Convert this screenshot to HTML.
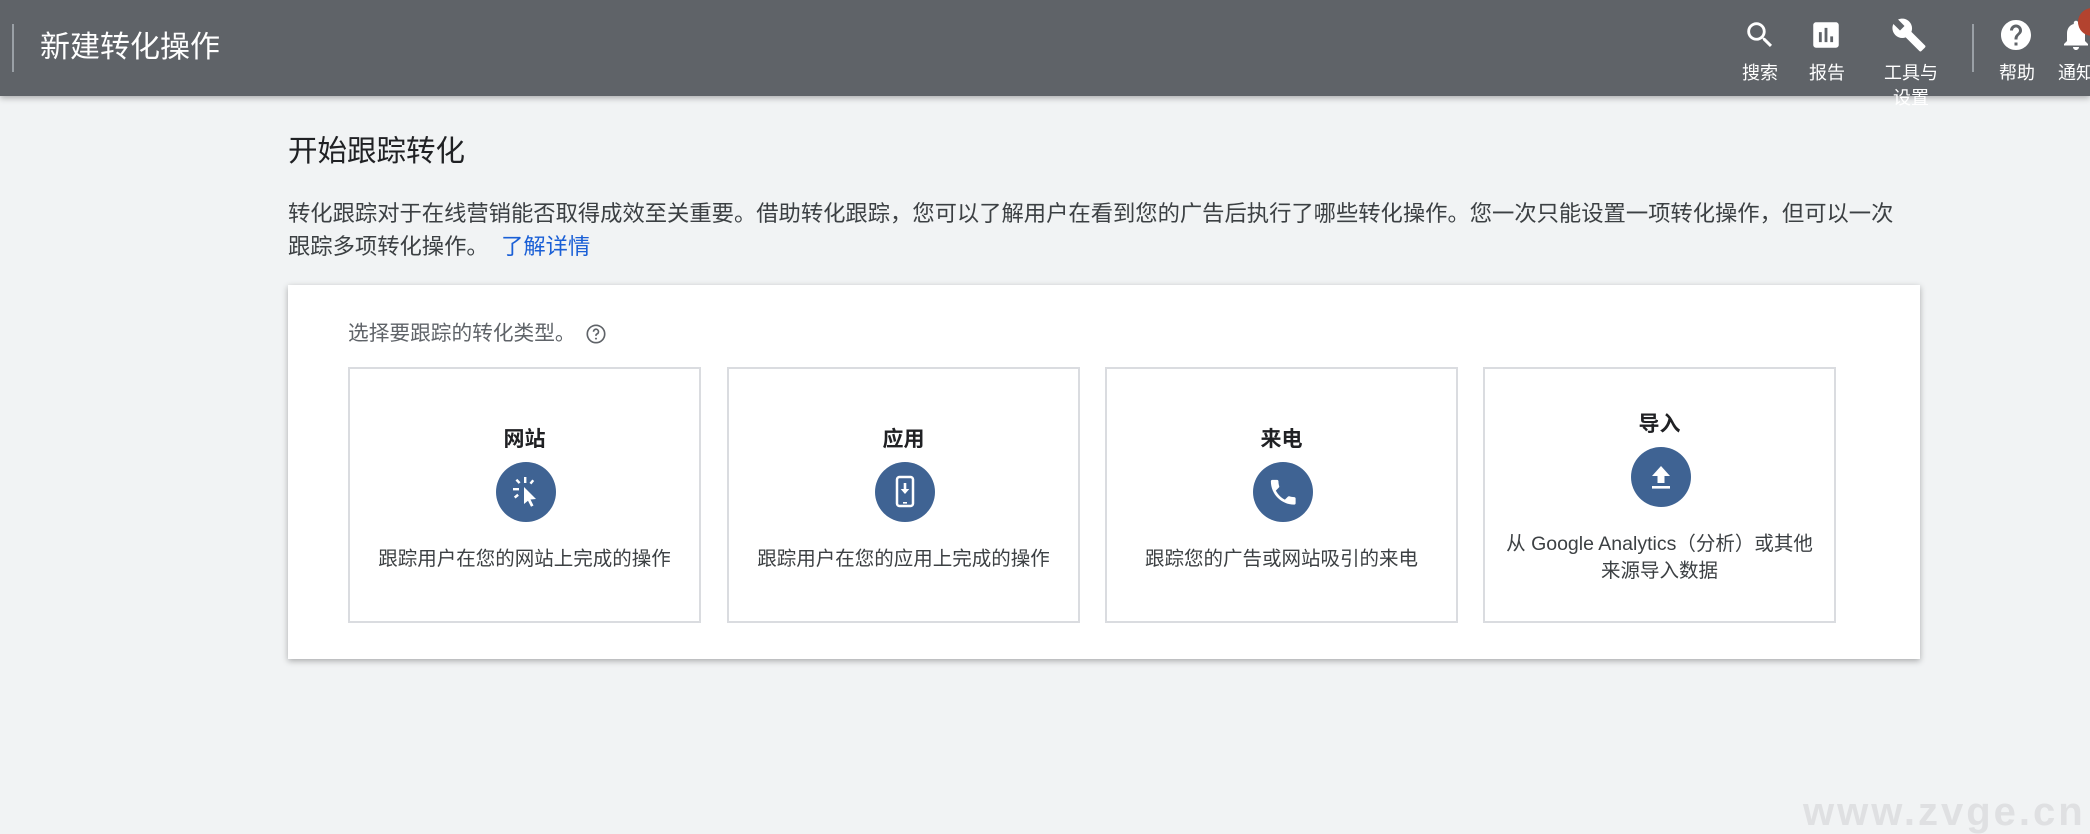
<!DOCTYPE html>
<html><head><meta charset="utf-8"><style>
*{margin:0;padding:0;box-sizing:border-box}
body{width:2090px;height:834px;overflow:hidden;background:#f1f3f4;font-family:"Liberation Sans","Noto Sans CJK SC",sans-serif;position:relative;color:#202124}
.hdr{position:absolute;left:0;top:0;width:2090px;height:96px;background:#5f6368;box-shadow:0 2px 6px rgba(0,0,0,.3)}
.abs{position:absolute}
.lbl{position:absolute;color:#fff;font-size:18px;text-align:center;width:80px;line-height:25px}
.card{position:absolute;left:288px;top:285px;width:1632px;height:374px;background:#fff;box-shadow:0 2px 6px rgba(0,0,0,.3)}
.opt{position:absolute;top:367px;width:353px;height:256px;border:2px solid #dadce0;background:#fff;text-align:center}
.opt .t{position:absolute;left:0;width:100%;font-size:21px;font-weight:bold;color:#202124}
.opt .c{position:absolute;left:146px;width:60px;height:60px;border-radius:50%;background:#3f6393}
.opt .d{position:absolute;left:0;width:100%;font-size:19.5px;color:#3c4043;line-height:27px}
</style></head><body>
<div class="hdr">
 <div class="abs" style="left:12px;top:24px;width:2px;height:48px;background:#9aa0a6"></div>
 <div class="abs" style="left:40px;top:28px;font-size:30px;color:#fff;line-height:40px">新建转化操作</div>
 <svg class="abs" style="left:1743px;top:18px" width="34" height="34" viewBox="0 0 24 24"><path fill="#fff" d="M15.5 14h-.79l-.28-.27A6.47 6.47 0 0 0 16 9.5 6.5 6.5 0 1 0 9.5 16c1.61 0 3.090-.59 4.23-1.57l.27.28v.79l5 4.99L20.490 19l-4.99-5zm-6 0C7.01 14 5 11.99 5 9.5S7.01 5 9.5 5 14 7.01 14 9.5 11.99 14 9.5 14z"/></svg>
 <svg class="abs" style="left:1809px;top:18px" width="34" height="34" viewBox="0 0 24 24"><path fill="#fff" d="M19 3H5c-1.1 0-2 .9-2 2v14c0 1.1.9 2 2 2h14c1.1 0 2-.9 2-2V5c0-1.1-.9-2-2-2zM9 17H7v-7h2v7zm4 0h-2V7h2v10zm4 0h-2v-4h2v4z"/></svg>
 <svg class="abs" style="left:1891px;top:17px" width="36" height="36" viewBox="0 0 24 24"><path fill="#fff" d="M22.7 19l-9.1-9.1c.9-2.3.4-5-1.5-6.9-2-2-5-2.4-7.4-1.3L9 6 6 9 1.6 4.7C.4 7.1.9 10.1 2.9 12.1c1.9 1.9 4.6 2.4 6.9 1.5l9.1 9.1c.4.4 1 .4 1.4 0l2.3-2.3c.5-.4.5-1.1.1-1.4z"/></svg>
 <div class="abs" style="left:1972px;top:24px;width:2px;height:48px;background:#9aa0a6"></div>
 <svg class="abs" style="left:1998px;top:17px" width="36" height="36" viewBox="0 0 24 24"><path fill="#fff" d="M12 2C6.48 2 2 6.48 2 12s4.480 10 10 10 10-4.48 10-10S17.52 2 12 2zm1 17h-2v-2h2v2zm2.07-7.75l-.9.92C13.45 12.9 13 13.5 13 15h-2v-.5c0-1.1.45-2.1 1.17-2.83l1.24-1.26c.37-.36.59-.86.59-1.41 0-1.1-.9-2-2-2s-2 .9-2 2H8c0-2.21 1.79-4 4-4s4 1.79 4 4c0 .88-.36 1.68-.93 2.25z"/></svg>
 <svg class="abs" style="left:2058px;top:17px" width="36" height="36" viewBox="0 0 24 24"><path fill="#fff" d="M12 22c1.1 0 2-.9 2-2h-4c0 1.1.89 2 2 2zm6-6v-5c0-3.07-1.64-5.64-4.5-6.32V4c0-.83-.67-1.5-1.5-1.5s-1.5.67-1.5 1.5v.68C7.63 5.36 6 7.92 6 11v5l-2 2v1h16v-1l-2-2z"/></svg>
 <div class="abs" style="left:2078px;top:8px;width:28px;height:28px;border-radius:50%;background:#b3432f"></div>
 <div class="lbl" style="left:1720px;top:61px">搜索</div>
 <div class="lbl" style="left:1787px;top:61px">报告</div>
 <div class="lbl" style="left:1871px;top:61px">工具与<br>设置</div>
 <div class="lbl" style="left:1977px;top:61px">帮助</div>
 <div class="lbl" style="left:2036px;top:61px">通知</div>
</div>
<div class="abs" style="left:288px;top:132px;font-size:29.5px;line-height:40px;color:#202124">开始跟踪转化</div>
<div class="abs" style="left:288px;top:197px;width:1615px;font-size:22.3px;line-height:33px;color:#3c4043">转化跟踪对于在线营销能否取得成效至关重要。借助转化跟踪，您可以了解用户在看到您的广告后执行了哪些转化操作。您一次只能设置一项转化操作，但可以一次跟踪多项转化操作。 &nbsp;<span style="color:#1a5fd6">了解详情</span></div>
<div class="card"></div>
<div class="abs" style="left:348px;top:320px;font-size:20.7px;color:#5f6368;line-height:28px">选择要跟踪的转化类型。</div>
<svg class="abs" style="left:585px;top:323px" width="22" height="22" viewBox="0 0 24 24"><circle cx="12" cy="12" r="9.5" fill="none" stroke="#5f6368" stroke-width="1.8"/><path d="M9.3 9.5a2.7 2.7 0 1 1 3.7 2.5c-.7.3-1 .8-1 1.5v.6" fill="none" stroke="#5f6368" stroke-width="1.8"/><circle cx="12" cy="17" r="1.1" fill="#5f6368"/></svg>

<div class="opt" style="left:348px">
 <div class="t" style="top:54px">网站</div>
 <div class="c" style="top:93px"><svg width="60" height="60" viewBox="0 0 60 60"><g fill="#fff"><path d="M28 25 L40 37 L34.5 37.5 L37.5 43.5 L35 44.7 L32 38.7 L28 42 Z"/><rect x="28" y="15" width="2.4" height="6"/><rect x="17" y="26" width="6" height="2.4"/><path d="M19.5 18.5l1.8-1.6 3.2 3.4-1.8 1.6z"/><path d="M36.3 17.5l1.9 1.5-2.8 3.4-1.9-1.5z"/><path d="M19.5 36.5l-1.6-1.9 3.4-2.8 1.6 1.9z"/></g></svg></div>
 <div class="d" style="top:177px">跟踪用户在您的网站上完成的操作</div>
</div>
<div class="opt" style="left:727px">
 <div class="t" style="top:54px">应用</div>
 <div class="c" style="top:93px"><svg width="60" height="60" viewBox="0 0 60 60"><rect x="22" y="15" width="16" height="29" rx="2.5" fill="none" stroke="#fff" stroke-width="2.5"/><rect x="28" y="40" width="4" height="1.6" fill="#fff"/><path d="M28.7 21h2.6v6h3l-4.3 5-4.3-5h3z" fill="#fff"/></svg></div>
 <div class="d" style="top:177px">跟踪用户在您的应用上完成的操作</div>
</div>
<div class="opt" style="left:1105px">
 <div class="t" style="top:54px">来电</div>
 <div class="c" style="top:93px"><svg width="60" height="60" viewBox="0 0 24 24"><path transform="translate(5.5,5.5) scale(0.55)" fill="#fff" d="M6.62 10.79c1.44 2.83 3.76 5.14 6.59 6.59l2.2-2.2c.27-.27.67-.36 1.02-.24 1.12.37 2.330.57 3.57.57.55 0 1 .45 1 1V20c0 .55-.45 1-1 1-9.39 0-17-7.61-17-17 0-.55.45-1 1-1h3.5c.55 0 1 .45 1 1 0 1.25.2 2.450.57 3.57.11.35.03.74-.25 1.02l-2.2 2.2z"/></svg></div>
 <div class="d" style="top:177px">跟踪您的广告或网站吸引的来电</div>
</div>
<div class="opt" style="left:1483px">
 <div class="t" style="top:39px">导入</div>
 <div class="c" style="top:78px"><svg width="60" height="60" viewBox="0 0 60 60"><path d="M30 19l-9 10h5.5v7h7v-7H39z" fill="#fff"/><rect x="21" y="39" width="18" height="2.6" fill="#fff"/></svg></div>
 <div class="d" style="top:162px">从 Google Analytics（分析）或其他<br>来源导入数据</div>
</div>
<div class="abs" style="left:1803px;top:790px;font-size:40px;font-weight:bold;letter-spacing:3px;color:#dfe0e2;line-height:44px;white-space:nowrap;font-family:'Liberation Sans',sans-serif">www.zvge.cn</div>
</body></html>
